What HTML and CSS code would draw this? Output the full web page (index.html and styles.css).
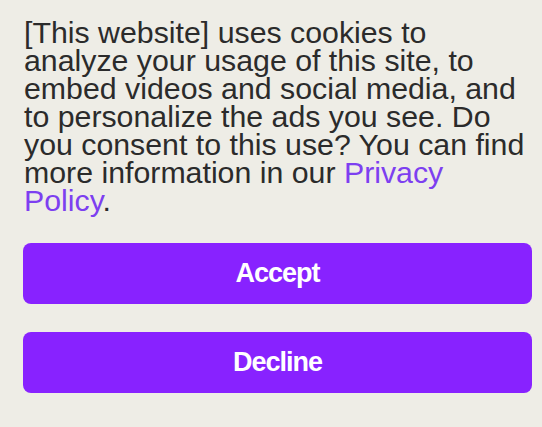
FILE: index.html
```html
<!DOCTYPE html>
<html lang="en">
<head>
  <meta charset="UTF-8" />
  <meta name="viewport" content="width=device-width, initial-scale=1.0"/>
  <title>Cookie consent</title>
  <link rel="stylesheet" href="styles.css">
</head>
<body>
  <div class="consent">
    <p class="consent-text">[This website] uses cookies to analyze your usage of this site, to embed videos and social media, and to personalize the ads you see. Do you consent to this use? You can find more information in our <a href="#" class="policy-link">Privacy Policy</a>.</p>

    <div class="consent-actions">
      <button class="consent-btn">Accept</button>
      <button class="consent-btn">Decline</button>
    </div>
  </div>
</body>
</html>
```

FILE: styles.css
```css
:root {
  --bg: #eeede6;
  --text: #2b2b2b;
  --link: #7d3ff0;
  --btn: #8822ff;
}

body {
  margin: 0;
  background: var(--bg);
  font-family: "Liberation Sans", Arial, sans-serif;
  color: var(--text);
}

.consent {
  padding: 19px 10px 20px 23px;
}

.consent-text {
  margin: 0 0 0 1px;
  font-size: 30.3px;
  line-height: 28px;
}

.policy-link {
  color: var(--link);
  text-decoration: none;
}

.consent-actions {
  display: flex;
  flex-direction: column;
  gap: 28px;
  margin-top: 28px;
}

.consent-btn {
  height: 61px;
  border: none;
  border-radius: 8px;
  background: var(--btn);
  color: #fff;
  font-family: "Liberation Sans", Arial, sans-serif;
  font-size: 27px;
  font-weight: bold;
  letter-spacing: -1px;
  cursor: pointer;
}
```
